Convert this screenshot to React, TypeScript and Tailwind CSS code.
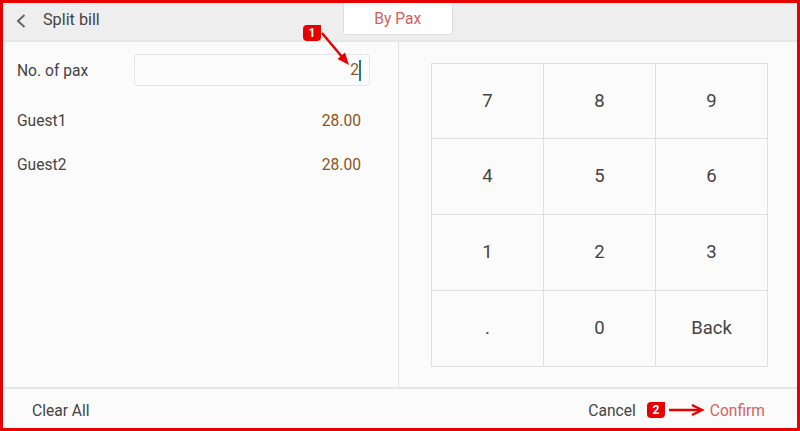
const keys = ["7", "8", "9", "4", "5", "6", "1", "2", "3", ".", "0", "Back"];

function Badge({ n }: { n: number }) {
  return (
    <span className="flex h-[16px] w-[18px] items-center justify-center rounded-[4px] rounded-tr-none bg-[#e60000] text-[12px] font-bold leading-none text-white">
      {n}
    </span>
  );
}

export default function App() {
  return (
    <div className="relative flex h-[431px] w-[800px] flex-col overflow-hidden border-[3px] border-[#e60000] bg-[#fbfbfb] font-['Roboto',sans-serif] text-[15.6px] text-[#444]">
      <header className="flex h-[39px] shrink-0 items-center border-b-2 border-[#e6e6e6] bg-[#eeeeee]">
        <svg className="ml-[12px] -mt-[2px] h-[16px] w-[12px]" viewBox="0 0 12 16" fill="none" stroke="#666" strokeWidth="2">
          <path d="M9.5 2 L3 8 L9.5 14" />
        </svg>
        <span className="ml-[16px] -mt-[2px] text-[16.2px]">Split bill</span>
        <div className="ml-[243px] flex h-[32px] w-[110px] items-center justify-center self-start rounded-b-[3px] border border-t-0 border-[#dedede] bg-white pt-[2px] text-[#d9605c]">
          By Pax
        </div>
      </header>

      <main className="flex min-h-0 flex-1">
        <section className="w-[396px] shrink-0 border-r border-[#e2e2e2] pl-[14px] pr-[28px] pt-[12px]">
          <div className="flex h-[32px] items-center">
            <span className="w-[117px] pt-[3px]">No. of pax</span>
            <div className="flex h-[32px] w-[237px] items-center justify-end rounded-[3px] border border-[#e6e6e6] bg-[#fcfcfc] pr-[8px] text-[#8a5a2b]">
              <span className="pt-[2px]">2</span>
              <span className="h-[21px] w-[2px] bg-[#14877a]" />
            </div>
          </div>
          <div className="mt-[13px] flex h-[45px] items-center justify-between pr-[9px]">
            <span>Guest1</span>
            <span className="text-[#8a5518]">28.00</span>
          </div>
          <div className="-mt-[1px] flex h-[45px] items-center justify-between pr-[9px]">
            <span>Guest2</span>
            <span className="text-[#8a5518]">28.00</span>
          </div>
        </section>

        <section className="flex-1 pl-[32px] pt-[21px]">
          <div className="grid h-[304px] w-[337px] grid-cols-[112px_112px_112px] grid-rows-[75px_76px_76px_76px] border-l border-t border-[#dfdfdf]">
            {keys.map((k) => (
              <div key={k} className="flex items-center justify-center border-b border-r border-[#dfdfdf] pt-[1px] text-[18.5px]">
                {k}
              </div>
            ))}
          </div>
        </section>
      </main>

      <footer className="flex h-[41px] shrink-0 items-center justify-between border-t-2 border-[#e6e6e6] pt-[6px] pl-[29px] pr-[32px]">
        <span>Clear All</span>
        <div className="flex items-center">
          <span>Cancel</span>
          <span className="ml-[74px] text-[#d9605c]">Confirm</span>
        </div>
      </footer>

      {/* annotations laid over the screen */}
      <div className="absolute left-[300px] top-[22px]">
        <Badge n={1} />
      </div>
      <svg className="absolute left-[315px] top-[27px]" width="40" height="40" viewBox="0 0 40 40" fill="none">
        <path d="M4 3 L25 28" stroke="#e60000" strokeWidth="2.5" />
        <path d="M27 22.6 L31 35 L19.5 29 Z" fill="#e60000" />
      </svg>
      <div className="absolute left-[644px] top-[399px]">
        <Badge n={2} />
      </div>
      <svg className="absolute left-[666px] top-[399px]" width="36" height="16" viewBox="0 0 36 16" fill="none" stroke="#e60000" strokeWidth="2.5">
        <path d="M0 8 H32" />
        <path d="M23 3 L33 8 L23 13" />
      </svg>
    </div>
  );
}
